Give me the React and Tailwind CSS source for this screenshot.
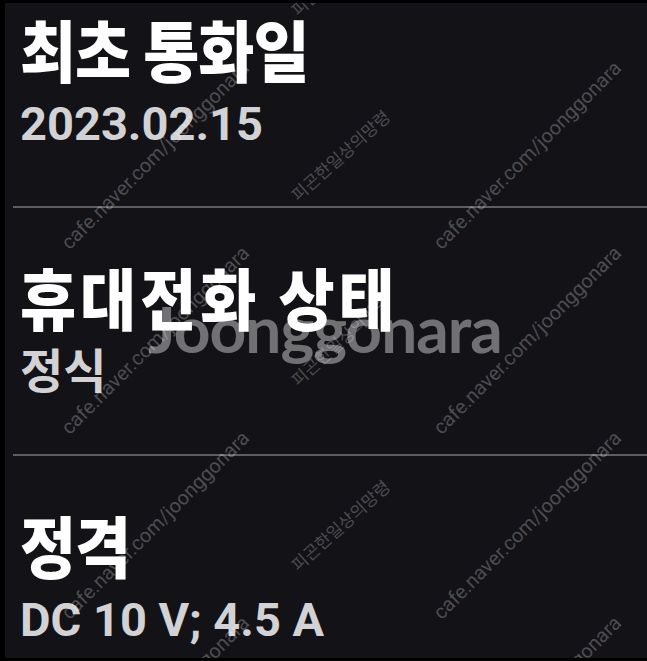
import React from 'react';

const cafeMarks = [
    [155, 155], [527, 155],
    [155, 340], [527, 340],
    [155, 525], [527, 525],
    [155, 710], [527, 710],
];

const ghostMarks = [[340, -30], [340, 155], [340, 340], [340, 525], [340, 710]];

function Row({ title, value, titleClass = 'tracking-[-1px]' }) {
    return (
        <section className="pl-[15px]">
            <h2 className={`origin-center scale-y-[1.1] font-['Noto_Sans_CJK_KR',sans-serif] text-[61px] font-black leading-[64px] text-white ${titleClass}`}>
                {title}
            </h2>
            <p className="mt-[16px] font-['Roboto','Noto_Sans_CJK_KR',sans-serif] text-[47px] font-bold leading-[56px] text-[#d2d2d4]">
                {value}
            </p>
        </section>
    );
}

export default function App() {
    return (
        <div className="relative h-[661px] w-[647px] overflow-hidden border-b-[3px] border-l-[5px] border-t-[3px] border-black bg-[#131217]">
            <div className="pt-[13px]">
                <Row title="최초 통화일" value="2023.02.15" />
            </div>
            <div className="ml-[8px] mt-[54px] h-[2px] bg-[#5e5e60]" />

            <div className="pt-[56px]">
                <Row title="휴대전화 상태" value="정식" titleClass="tracking-[4px]" />
            </div>
            <div className="ml-[8px] mt-[54px] h-[2px] bg-[#5e5e60]" />

            <div className="pt-[56px]">
                <Row title="정격" value="DC 10 V; 4.5 A" />
            </div>

            {/* watermark overlay */}
            <div className="pointer-events-none absolute inset-0">
                <div className="absolute left-[320px] top-[326px] -translate-x-1/2 -translate-y-1/2 font-['Lato','Inter',sans-serif] text-[64px] font-bold tracking-[-1px] text-white/40">
                    Joonggonara
                </div>
                {cafeMarks.map(([x, y], i) => (
                    <div
                        key={'c' + i}
                        className="absolute -translate-x-1/2 -translate-y-1/2 -rotate-45 whitespace-nowrap font-['Roboto',sans-serif] text-[20px] text-white/25"
                        style={{ left: x - 5, top: y - 3 }}
                    >
                        cafe.naver.com/joonggonara
                    </div>
                ))}
                {ghostMarks.map(([x, y], i) => (
                    <div
                        key={'g' + i}
                        className="absolute -translate-x-1/2 -translate-y-1/2 -rotate-[42deg] whitespace-nowrap font-['Noto_Sans_CJK_KR',sans-serif] text-[17px] text-white/25"
                        style={{ left: x - 5, top: y - 3 }}
                    >
                        피곤한일상의망령
                    </div>
                ))}
            </div>
        </div>
    );
}
